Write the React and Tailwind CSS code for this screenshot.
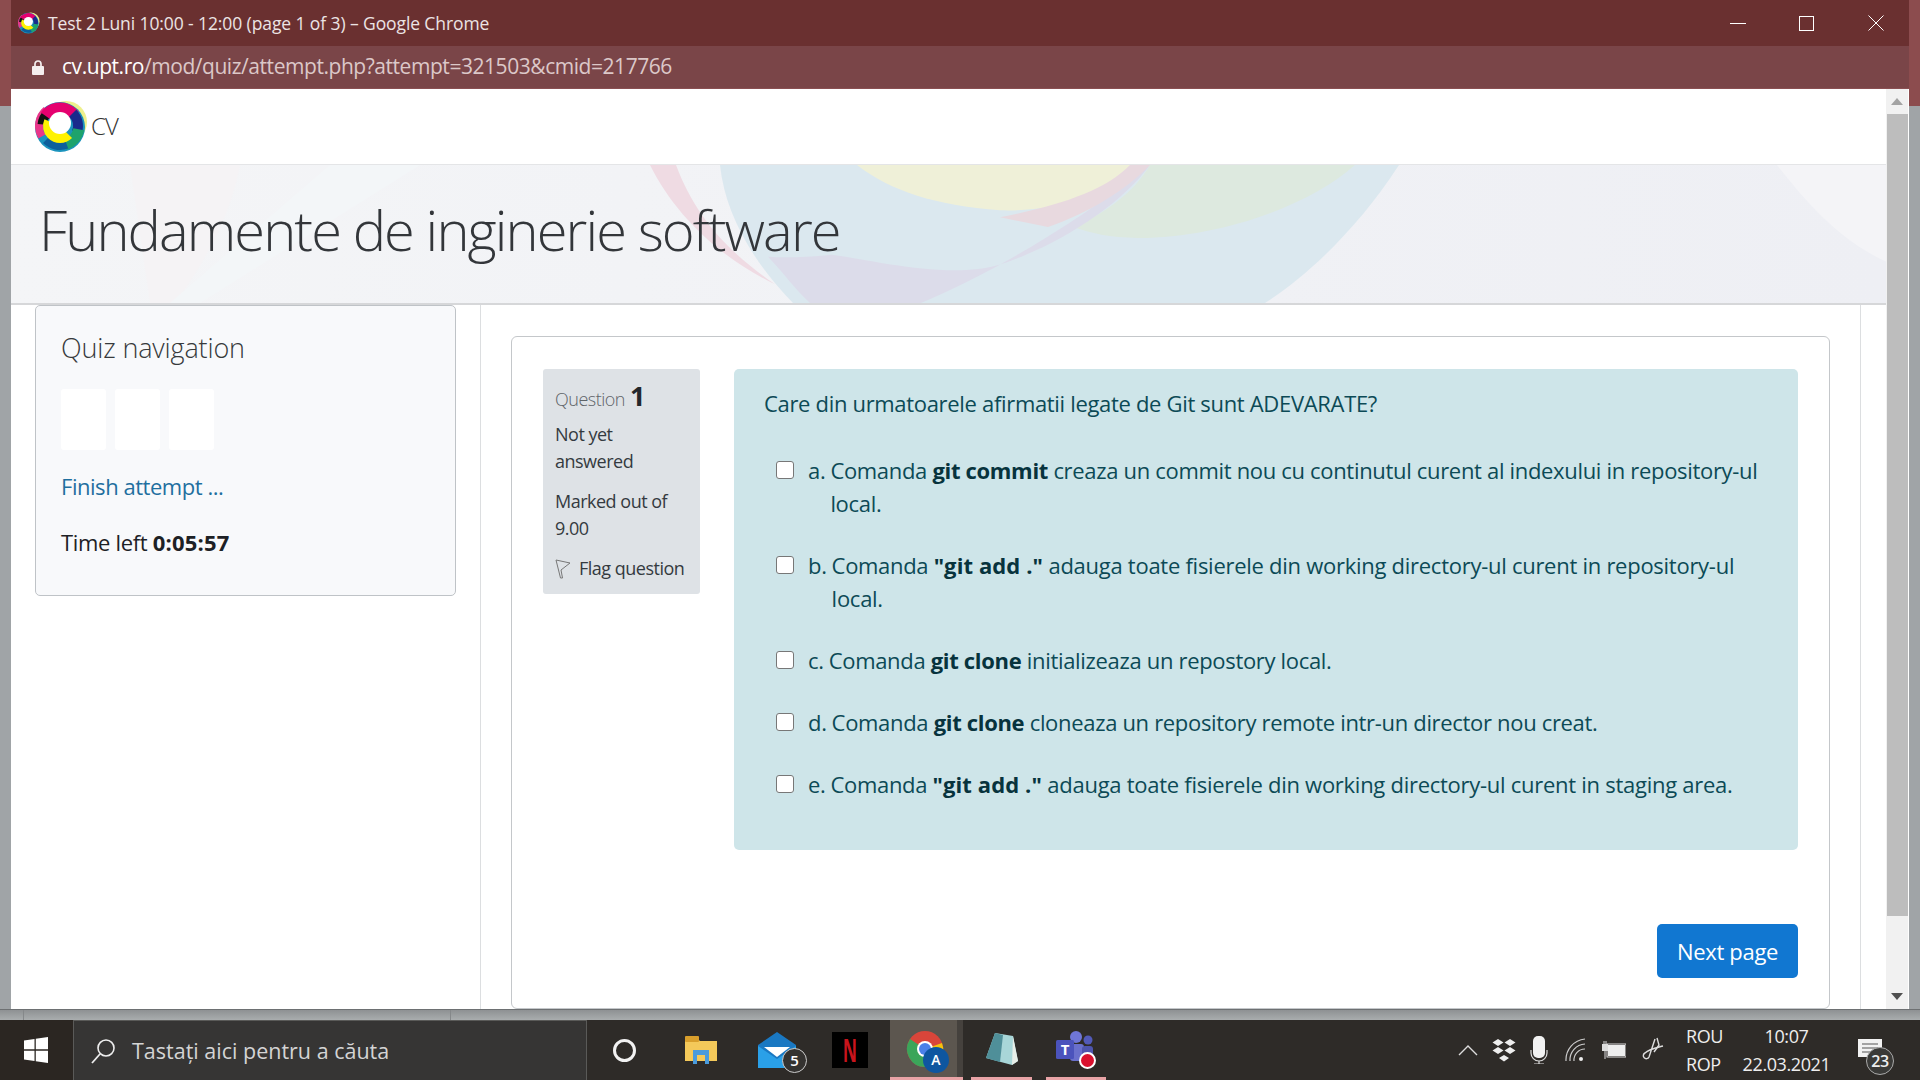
import React from 'react';

const options = [
  { key: 'a.', before: 'Comanda ', bold: 'git commit', after: ' creaza un commit nou cu continutul curent al indexului in repository-ul local.' },
  { key: 'b.', before: 'Comanda ', bold: '"git add ."', after: ' adauga toate fisierele din working directory-ul curent in repository-ul local.', wide: true },
  { key: 'c.', before: 'Comanda ', bold: 'git clone', after: ' initializeaza un repostory local.' },
  { key: 'd.', before: 'Comanda ', bold: 'git clone', after: ' cloneaza un repository remote intr-un director nou creat.' },
  { key: 'e.', before: 'Comanda ', bold: '"git add ."', after: ' adauga toate fisierele din working directory-ul curent in staging area.', wide: true },
];

// colored ring logo, also used small in the title bar
const Logo = ({ size = 53 }) => {
  const seg = (color, len, rot, r = 19, sw = 13) => (
    <circle cx="25" cy="26" r={r} fill="none" stroke={color} strokeWidth={sw} pathLength="100" strokeDasharray={`${len} ${100 - len}`} transform={`rotate(${rot} 25 26)`} />
  );
  return (
    <svg width={size} height={size} viewBox="0 0 53 53">
      <circle cx="31" cy="22" r="21" fill="#eef08c" />
      <circle cx="25" cy="27" r="25" fill="#1b93bd" />
      {seg('#e9368a', 22, 150, 21, 8)}
      {seg('#111', 12, 185, 18, 9)}
      {seg('#e5006f', 30, 215, 17, 13)}
      {seg('#1a2a8c', 18, 315, 18, 10)}
      {seg('#1ea36c', 18, 10, 19, 11)}
      {seg('#0d5f9c', 18, 70, 20, 8)}
      {seg('#fff200', 44, 45, 12, 10)}
      <ellipse cx="25" cy="23" rx="11" ry="11" fill="#fff" />
    </svg>
  );
};

const HeroShapes = () => (
  <svg className="absolute inset-0 w-full h-full" viewBox="11 164 1875 140" preserveAspectRatio="none">
    <path d="M130 164 L240 164 C230 220 200 270 175 304 L150 304 Z" fill="#f5f3f5" />
    <path d="M330 164 L420 164 L200 304 L170 304 Z" fill="#f3f6f8" />
    <path d="M1777 164 L1886 164 L1886 262 C1850 245 1820 220 1777 164 Z" fill="#f4f4f7" />
    <path d="M650 164 L676 164 C695 215 725 250 775 285 C720 258 675 215 650 164 Z" fill="#efdbe3" />
    <path d="M720 164 L1399 164 C1360 225 1310 275 1265 304 L793 304 C755 265 725 215 720 164 Z" fill="#dbe8ef" />
    <path d="M857 164 L1150 164 C1110 195 1050 212 1000 210 C935 205 890 190 857 164 Z" fill="#eff0d8" />
    <path d="M1150 164 L1355 164 C1310 205 1220 238 1138 238 C1110 238 1090 233 1074 227 C1110 210 1135 190 1150 164 Z" fill="#dde9df" />
    <path d="M1150 164 C1120 205 1060 245 1000 265 C950 280 880 262 832 255 C800 258 785 258 768 257 C785 275 795 290 810 304 L921 304 C1000 270 1080 220 1150 164 Z" fill="#dcdcea" />
    <path d="M1130 164 L1150 164 C1125 190 1090 212 1048 227 L1000 217 C1060 205 1105 190 1130 164 Z" fill="#e8d9df" />
  </svg>
);

const Chrome = () => (
  <svg width="44" height="44" viewBox="0 0 44 44">
    <circle cx="20" cy="22" r="18" fill="#d9453a" />
    <path d="M20 22 L37 16 A18 18 0 0 1 38 27 L30 27 Z" fill="#f4c20d" />
    <path d="M20 22 L5 12 A18 18 0 0 0 20 40 Z" fill="#3ba55a" />
    <circle cx="20" cy="22" r="8" fill="#fff" />
    <circle cx="20" cy="22" r="6" fill="#4a80e8" />
  </svg>
);

const Teams = () => (
  <div className="relative w-[40px] h-[36px]">
    <svg width="40" height="36" viewBox="0 0 40 36" className="absolute inset-0">
      <circle cx="20" cy="6" r="6" fill="#6f76d6" />
      <circle cx="32" cy="9" r="4.5" fill="#525ab8" />
      <rect x="14" y="13" width="14" height="17" rx="3" fill="#6a70cc" />
      <rect x="26" y="15" width="11" height="13" rx="3" fill="#4e55ad" />
      <rect x="0" y="9" width="18" height="19" rx="1.5" fill="#4b53bc" />
    </svg>
    <span className="absolute left-0 top-[9px] w-[18px] text-center text-white text-[15px] leading-[19px] font-bold">T</span>
    <span className="absolute right-0 bottom-[-2px] w-[17px] h-[17px] rounded-full bg-[#d9112e] border-2 border-white"></span>
  </div>
);

const App = () => {
  return (
    <div className="w-[1920px] h-[1080px] overflow-hidden flex flex-col bg-[#a3a7a9] font-['Open_Sans',sans-serif]">
      <div className="flex h-[1009px]">
        <div className="w-[11px] flex flex-col">
          <div className="h-[106px] bg-[#8c4c4e]"></div>
          <div className="flex-1 bg-[#a0a4a7]"></div>
        </div>

        <div className="w-[1898px] flex flex-col overflow-hidden">
          {/* title bar */}
          <div className="h-[46px] bg-[#6a3030] flex items-center relative">
            <div className="w-[22px] h-[22px] ml-[7px]"><Logo size={22} /></div>
            <span className="ml-[8px] text-[17.5px] tracking-[-0.1px] text-[#ece4e4]">Test 2 Luni 10:00 - 12:00 (page 1 of 3) – Google Chrome</span>
            <div className="ml-auto flex items-center">
              <div className="w-[16px] h-[1px] bg-white mr-[53px]"></div>
              <div className="w-[15px] h-[15px] border border-white mr-[54px]"></div>
              <svg width="16" height="16" viewBox="0 0 16 16" className="mr-[25px]"><path d="M0.5 0.5 L15.5 15.5 M15.5 0.5 L0.5 15.5" stroke="#fff" strokeWidth="1" /></svg>
            </div>
          </div>
          {/* address bar */}
          <div className="h-[43px] bg-[#7a4548] border-b border-[#8a4f52] flex items-center">
            <svg width="12" height="15" viewBox="0 0 12 15" className="ml-[21px]"><rect x="0" y="6" width="12" height="9" rx="1" fill="#f4eeee" /><path d="M3 6 V4 A3 3 0 0 1 9 4 V6" fill="none" stroke="#f4eeee" strokeWidth="1.7" /></svg>
            <span className="ml-[18px] text-[21px] tracking-[-0.45px] text-[#dcc8c8]"><span className="text-white">cv.upt.ro</span>/mod/quiz/attempt.php?attempt=321503&amp;cmid=217766</span>
          </div>

          <div className="flex-1 flex min-h-0">
            {/* page */}
            <div className="flex-1 flex flex-col bg-white min-w-0">
              <div className="h-[75px] flex items-center pl-[24px] shrink-0">
                <Logo />
                <span className="text-[#333] text-[24px] ml-[3px] mt-[-2px] font-light tracking-[-1px]">CV</span>
              </div>
              <div className="h-[141px] shrink-0 relative bg-gradient-to-r from-[#f4f5f7] to-[#eeeff4] border-t border-[#e4e5e7] border-b-2 border-b-[#d6d7d9] overflow-hidden">
                <HeroShapes />
                <h1 className="relative pl-[28px] pt-[27px] text-[56px] leading-[74px] font-light text-[#33363a] tracking-[-1.9px] whitespace-nowrap">Fundamente de inginerie software</h1>
              </div>

              <div className="flex-1 flex min-h-0 pl-[24px] pr-[25px]">
                <div className="w-[421px] shrink-0 h-[291px] bg-[#f8f9fb] border border-[#bfc3c7] rounded-[5px] pl-[25px] pt-[24px]">
                  <div className="text-[27px] leading-[36px] font-light text-[#373a3c] tracking-[-0.15px]">Quiz navigation</div>
                  <div className="flex gap-[9px] mt-[23px]">
                    <div className="w-[45px] h-[61px] bg-white rounded-[3px]"></div>
                    <div className="w-[45px] h-[61px] bg-white rounded-[3px]"></div>
                    <div className="w-[45px] h-[61px] bg-white rounded-[3px]"></div>
                  </div>
                  <div className="mt-[20px] text-[22px] leading-[33px] text-[#1f6f9f] tracking-[-0.46px]">Finish attempt ...</div>
                  <div className="mt-[23px] text-[22px] leading-[33px] text-[#1d2125] tracking-[-0.32px]">Time left <b className="font-bold tracking-[0.2px]">0:05:57</b></div>
                </div>

                <div className="ml-[24px] flex-1 border-x border-[#dcdee0] pl-[30px] pr-[30px] pt-[31px] min-w-0">
                  <div className="h-[673px] border border-[#c4c7ca] rounded-[6px] pt-[32px] pl-[31px] pr-[31px]">
                    <div className="flex">
                      <div className="w-[157px] h-[225px] shrink-0 bg-[#dee2e6] rounded-[3px] pl-[12px] pr-[4px] pt-[13px] text-[#343a40] text-[18px] leading-[27px] tracking-[-0.5px]">
                        <div className="flex items-baseline h-[32px]">
                          <span className="text-[#5e6469] font-light">Question</span>
                          <b className="ml-[5px] text-[27px] font-bold text-[#23272b]">1</b>
                        </div>
                        <div className="mt-[7px]">Not yet<br />answered</div>
                        <div className="mt-[13px]">Marked out of<br />9.00</div>
                        <div className="mt-[13px] flex items-center">
                          <svg width="16" height="20" viewBox="0 0 16 20"><path d="M1 1 L15 4 L6 11 L7.5 19 L5.5 19 Z" fill="none" stroke="#777" strokeWidth="1" /></svg>
                          <span className="ml-[8px]">Flag question</span>
                        </div>
                      </div>

                      <div className="ml-[34px] flex-1 h-[481px] bg-[#cee5e9] rounded-[5px] pl-[30px] pt-[18px] text-[22px] leading-[33px] text-[#0c4a56] tracking-[-0.32px]">
                        <div>Care din urmatoarele afirmatii legate de Git sunt ADEVARATE?</div>
                        <div className="mt-[34px] flex flex-col gap-[29px] pl-[12px] pr-[30px]">
                          {options.map((o) => (
                            <div key={o.key} className="flex">
                              <span className="w-[18px] h-[18px] mt-[7px] shrink-0 bg-white border border-[#777] rounded-[3px]"></span>
                              <span className="ml-[14px] mr-[5px] shrink-0">{o.key}</span>
                              <span className="flex-1">
                                {o.before}
                                <b className={o.wide ? 'font-bold text-[#07333d] tracking-[0.1px]' : 'font-bold text-[#07333d]'}>{o.bold}</b>
                                <span className={o.wide ? 'tracking-[-0.27px]' : ''}>{o.after}</span>
                              </span>
                            </div>
                          ))}
                        </div>
                      </div>
                    </div>
                    <div className="flex justify-end mt-[74px]">
                      <button className="w-[141px] h-[54px] bg-[#1177d1] text-white rounded-[5px] text-[22px] tracking-[-0.32px]">Next page</button>
                    </div>
                  </div>
                </div>
              </div>
            </div>

            {/* scrollbar */}
            <div className="w-[23px] shrink-0 bg-[#f1f1f1] flex flex-col items-center border-r border-white">
              <div className="h-[25px] flex items-center justify-center shrink-0">
                <svg width="12" height="7" viewBox="0 0 12 7"><path d="M6 0 L12 7 L0 7 Z" fill="#a3a3a3" /></svg>
              </div>
              <div className="w-[21px] h-[802px] bg-[#bdbdbd] shrink-0"></div>
              <div className="mt-auto h-[26px] flex items-center justify-center">
                <svg width="12" height="7" viewBox="0 0 12 7"><path d="M0 0 L12 0 L6 7 Z" fill="#505050" /></svg>
              </div>
            </div>
          </div>
        </div>

        <div className="flex-1 flex flex-col">
          <div className="h-[106px] bg-[#8c4c4e]"></div>
          <div className="flex-1 bg-[#a0a4a7]"></div>
        </div>
      </div>

      {/* strip of the window behind */}
      <div className="h-[11px] flex border-t border-[#6d7072] bg-gradient-to-b from-[#8e9193] to-[#a9adae]">
        <div className="w-[24px] border-r border-[#85888a]"></div>
        <div className="w-[427px] border-r border-[#85888a]"></div>
      </div>

      {/* taskbar */}
      <div className="h-[60px] flex items-stretch bg-[#2e2b28] text-white">
        <div className="w-[73px] flex items-center justify-center bg-[#2b2622] pr-[2px]">
          <svg width="24" height="26" viewBox="0 0 24 26"><path d="M0 3.5 L10.5 2 V12.3 H0 Z M11.8 1.8 L24 0 V12.3 H11.8 Z M0 13.7 H10.5 V24 L0 22.5 Z M11.8 13.7 H24 V26 L11.8 24.2 Z" fill="#fff" /></svg>
        </div>
        <div className="w-[514px] bg-[#363534] border-x border-t border-[#5a5a58] flex items-center pl-[17px]">
          <svg width="25" height="26" viewBox="0 0 25 26"><circle cx="15" cy="10" r="8" fill="none" stroke="#eee" strokeWidth="1.6" /><path d="M9 16 L1 25" stroke="#eee" strokeWidth="1.8" /></svg>
          <span className="ml-[16px] mt-[2px] text-[21.5px] text-[#d4d4d4]">Tastați aici pentru a căuta</span>
        </div>
        <div className="w-[74px] flex items-center justify-center">
          <div className="w-[23px] h-[23px] rounded-full border-[3px] border-[#f2f2f2]"></div>
        </div>
        <div className="w-[80px] flex items-center justify-center">
          <svg width="34" height="28" viewBox="0 0 34 28">
            <path d="M1 2 H13 L16 5 H33 V25 H1 Z" fill="#f4c95a" />
            <rect x="1" y="0" width="14" height="6" rx="1" fill="#d99f2c" />
            <path d="M9 28 V14 H25 V28 H21 V19 H13 V28 Z" fill="#4a9bdc" />
          </svg>
        </div>
        <div className="w-[72px] flex items-center justify-center">
          <div className="relative w-[38px] h-[36px]">
            <svg width="38" height="36" viewBox="0 0 38 36" className="absolute inset-0">
              <path d="M0 13 L19 0 L38 13 V36 H0 Z" fill="#1a78c2" />
              <path d="M0 14 L19 27 L38 14 V36 H0 Z" fill="#2aa0e8" />
              <path d="M6 15 H32 L19 25 Z" fill="#fff" />
            </svg>
            <span className="absolute left-[24px] top-[16px] w-[25px] h-[25px] rounded-full bg-[#343230] border border-[#ccc] text-[15px] leading-[23px] text-center font-semibold">5</span>
          </div>
        </div>
        <div className="w-[77px] flex items-center justify-center pr-[3px]">
          <div className="w-[36px] h-[36px] bg-black flex items-center justify-center text-[#c8141c] text-[32px] font-bold leading-none">
            <span className="scale-x-[0.55]">N</span>
          </div>
        </div>
        <div className="w-[73px] flex flex-col">
          <div className="flex-1 flex">
            <div className="w-[67px] relative bg-[#5c564f] flex items-center justify-center">
              <div className="ml-[6px]"><Chrome /></div>
              <span className="absolute left-[33px] top-[27px] w-[26px] h-[26px] rounded-full bg-[#0e56a0] text-white text-[14px] leading-[26px] text-center font-semibold">A</span>
            </div>
            <div className="flex-1 bg-[#45413d]"></div>
          </div>
          <div className="h-[3px] bg-[#e8a3a6]"></div>
        </div>
        <div className="w-[74px] pl-[8px] pr-[5px] flex">
          <div className="flex-1 flex items-center justify-center border-b-[3px] border-b-[#e8a3a6]">
            <svg width="32" height="32" viewBox="0 0 32 32">
              <path d="M9 0 L27 3 L32 28 L26 32 L0 25 Z" fill="#a8d6d8" />
              <path d="M9 0 L0 25 L14 29 L17 2 Z" fill="#4f8f99" />
              <path d="M26 32 L27 3 L32 28 Z" fill="#e8eee8" />
            </svg>
          </div>
        </div>
        <div className="w-[73px] pl-[9px] pr-[4px] flex">
          <div className="flex-1 flex items-center justify-center border-b-[3px] border-b-[#e8a3a6]">
            <Teams />
          </div>
        </div>

        {/* tray */}
        <div className="ml-auto w-[470px] flex items-center text-[#eee]">
          <div className="w-[36px] flex justify-center"><svg width="20" height="11" viewBox="0 0 20 11"><path d="M1 10 L10 1 L19 10" fill="none" stroke="#ddd" strokeWidth="1.4" /></svg></div>
          <div className="w-[36px] flex justify-center">
            <svg width="24" height="24" viewBox="0 0 24 24" fill="#eee"><path d="M6 1 L11.5 4.5 L6 8 L0.5 4.5 Z M18 1 L23.5 4.5 L18 8 L12.5 4.5 Z M6 9 L11.5 12.5 L6 16 L0.5 12.5 Z M18 9 L23.5 12.5 L18 16 L12.5 12.5 Z M12 17 L17 20 L12 23.5 L7 20 Z" /></svg>
          </div>
          <div className="w-[34px] flex justify-center">
            <svg width="18" height="28" viewBox="0 0 18 28"><rect x="3" y="0" width="12" height="22" rx="5" fill="#f2f2f2" /><path d="M1 14 V17 A8 8 0 0 0 17 17 V14 M9 25 V28 M4 28 H14" fill="none" stroke="#ddd" strokeWidth="1.2" /></svg>
          </div>
          <div className="w-[40px] flex justify-center">
            <svg width="22" height="24" viewBox="0 0 22 24" fill="none" stroke="#ccc" strokeWidth="1.2"><path d="M1 23 A21 21 0 0 1 20 1" /><path d="M5 23 A16 16 0 0 1 20 6" /><path d="M9 23 A11 11 0 0 1 20 11" /><circle cx="16" cy="21" r="2" fill="#eee" stroke="none" /></svg>
          </div>
          <div className="w-[36px] flex justify-center">
            <svg width="24" height="18" viewBox="0 0 24 18"><rect x="5" y="3" width="19" height="13" fill="none" stroke="#ddd" /><rect x="6" y="4" width="17" height="11" fill="#eee" /><rect x="0" y="3" width="6" height="7" fill="#ddd" /><path d="M2 0 V3 M4 0 V3 M3 10 V18" stroke="#ddd" strokeWidth="1" /></svg>
          </div>
          <div className="w-[42px] flex justify-center">
            <svg width="24" height="26" viewBox="0 0 24 26" fill="none" stroke="#ddd" strokeWidth="1.4"><path d="M14 2 L8 20 A3 3 0 1 1 4 16 C8 12 14 11 22 9" /><path d="M16 1 L18 8 L13 15" /></svg>
          </div>
          <div className="w-[56px] pl-[12px] text-[18px] leading-[28px] tracking-[-0.4px]">ROU<br />ROP</div>
          <div className="w-[110px] text-center text-[18px] leading-[28px] tracking-[-0.4px] pl-[3px]">10:07<br />22.03.2021</div>
          <div className="relative flex-1 h-full">
            <svg width="24" height="20" viewBox="0 0 24 20" className="absolute left-[18px] top-[19px]"><path d="M0 0 H24 V18 H0 Z" fill="#f2f2f2" /><path d="M4 5 H20 M4 9 H20 M4 13 H16" stroke="#555" strokeWidth="1" /></svg>
            <span className="absolute left-[26px] top-[27px] w-[28px] h-[28px] rounded-full bg-[#3a3a38] border border-[#aaa] text-[16px] leading-[26px] text-center font-semibold tracking-[-0.5px]">23</span>
          </div>
        </div>
      </div>
    </div>
  );
};

export default App;
